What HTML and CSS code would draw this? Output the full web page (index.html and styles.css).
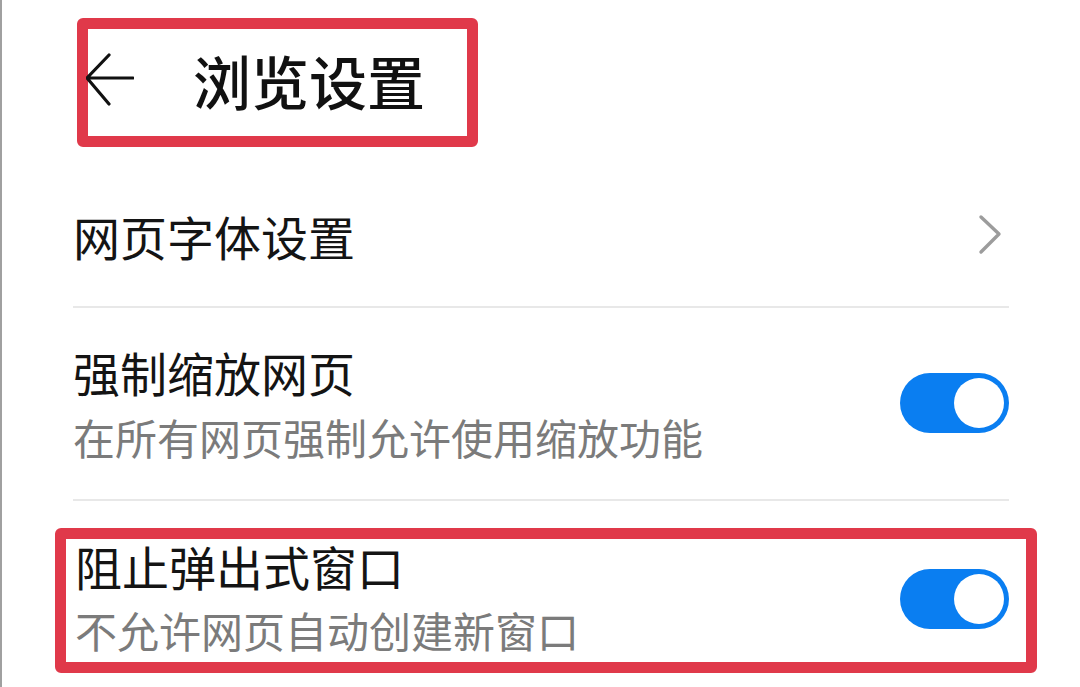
FILE: index.html
```html
<!DOCTYPE html>
<html lang="zh-CN">
<head>
<meta charset="utf-8">
<title>浏览设置</title>
<link rel="stylesheet" href="styles.css">
</head>
<body>
<div class="page">
  <header class="header">
    <svg class="back" width="48" height="58" viewBox="0 0 48 58" aria-hidden="true">
      <path d="M23 3 L1 26 L23 52 M1 26 L47 26" fill="none" stroke="#111" stroke-width="3.2" stroke-linecap="round" stroke-linejoin="round"/>
    </svg>
    <h1 class="title">浏览设置</h1>
  </header>
  <div class="list">
    <div class="row row-link">
      <div class="row-title">网页字体设置</div>
      <svg class="chevron" width="24" height="42" viewBox="0 0 24 42" aria-hidden="true">
        <path d="M3 3 L21 20 L3 38" fill="none" stroke="#9c9c9c" stroke-width="3.4" stroke-linecap="round" stroke-linejoin="round"/>
      </svg>
    </div>
    <div class="row row-switch">
      <div class="texts">
        <div class="row-title">强制缩放网页</div>
        <div class="row-sub">在所有网页强制允许使用缩放功能</div>
      </div>
      <div class="switch"><span class="knob"></span></div>
    </div>
    <div class="row row-boxed">
      <div class="texts">
        <div class="row-title">阻止弹出式窗口</div>
        <div class="row-sub">不允许网页自动创建新窗口</div>
      </div>
      <div class="switch"><span class="knob"></span></div>
    </div>
  </div>
</div>
</body>
</html>
```
FILE: styles.css
```css
html, body {
  margin: 0;
  padding: 0;
  background: #fff;
}
body {
  font-family: "Noto Sans CJK SC", "Noto Sans", sans-serif;
  color: #141414;
}
.page {
  width: 1080px;
  height: 687px;
  box-sizing: border-box;
  border-left: 2px solid #a0a0a0;
  overflow: hidden;
}
.header {
  margin: 18px 0 0 75px;
  width: 401px;
  height: 129px;
  box-sizing: border-box;
  border: 11px solid #e0394a;
  border-radius: 6px;
  display: flex;
  align-items: center;
}
.back {
  display: block;
  margin-left: -2px;
  margin-top: -4px;
}
.title {
  margin: -6px 0 0 59px;
  font-size: 58px;
  line-height: 58px;
  font-weight: 500;
  color: #111;
}
.list {
  margin-left: 71px;
  width: 936px;
}
.row {
  display: flex;
  align-items: center;
  justify-content: space-between;
}
.row-link {
  padding: 65px 0 47px;
  border-bottom: 2px solid #e8e8e8;
}
.row-switch {
  padding: 40px 0 41px;
  border-bottom: 2px solid #e8e8e8;
}
.row-title {
  font-size: 47px;
  line-height: 47px;
  color: #141414;
}
.row-sub {
  margin-top: 21px;
  font-size: 42px;
  line-height: 42px;
  color: #7b7b7b;
}
.chevron {
  display: block;
  margin-right: 7px;
  margin-top: -2px;
}
.switch {
  width: 109px;
  height: 60px;
  border-radius: 30px;
  background: #0a7ef1;
  position: relative;
  flex: none;
}
.knob {
  position: absolute;
  top: 5px;
  right: 5px;
  width: 50px;
  height: 50px;
  border-radius: 50%;
  background: #fff;
}
.row-boxed {
  margin: 27px 0 0 -18px;
  width: 982px;
  box-sizing: border-box;
  border: 11px solid #e0394a;
  border-radius: 6px;
  padding: 3px 17px 11px 9px;
}
.row-boxed .row-sub {
  margin-top: 20px;
}
.row-boxed .switch {
  margin-top: 5px;
}
```
